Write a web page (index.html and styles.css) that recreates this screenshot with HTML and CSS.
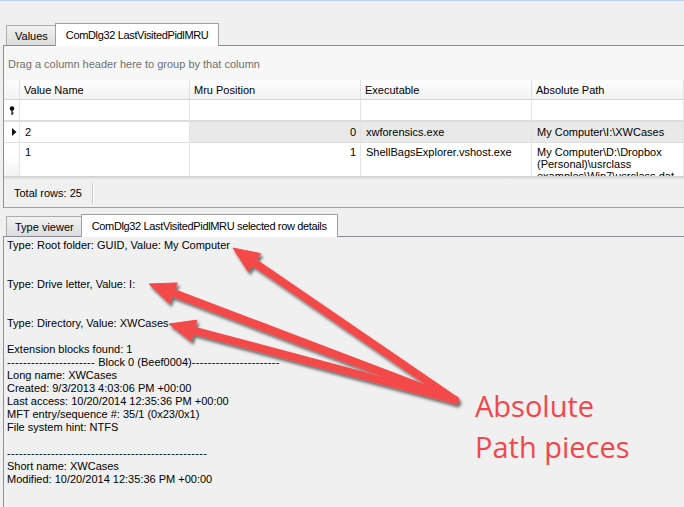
FILE: index.html
```html
<!DOCTYPE html>
<html>
<head>
<meta charset="utf-8">
<link rel="stylesheet" href="styles.css">
</head>
<body>
<div class="app">
  <div class="topline"></div>
  <div class="tabs tabs1">
    <div class="tab">Values</div>
    <div class="tab active">ComDlg32 LastVisitedPidlMRU</div>
  </div>
  <div class="panel1">
    <div class="groupbar">Drag a column header here to group by that column</div>
    <div class="grid">
      <div class="cell hdr ind"></div>
      <div class="cell hdr">Value Name</div>
      <div class="cell hdr">Mru Position</div>
      <div class="cell hdr">Executable</div>
      <div class="cell hdr">Absolute Path</div>

      <div class="cell filt ind">
        <svg width="6" height="9" viewBox="0 0 6 9"><circle cx="3" cy="2.5" r="2.3" fill="#111"/><rect x="2.4" y="4" width="1.3" height="5" fill="#111"/><rect x="3.5" y="6.5" width="1.2" height="1" fill="#111"/></svg>
      </div>
      <div class="cell filt"></div>
      <div class="cell filt"></div>
      <div class="cell filt"></div>
      <div class="cell filt"></div>

      <div class="cell row ind">
        <svg width="5" height="8" viewBox="0 0 5 8"><path d="M0 0 L4.5 4 L0 8 Z" fill="#111"/></svg>
      </div>
      <div class="cell row focus">2</div>
      <div class="cell row sel num">0</div>
      <div class="cell row sel">xwforensics.exe</div>
      <div class="cell row sel">My Computer\I:\XWCases</div>

      <div class="cell row tall ind"></div>
      <div class="cell row tall">1</div>
      <div class="cell row tall num">1</div>
      <div class="cell row tall">ShellBagsExplorer.vshost.exe</div>
      <div class="cell row tall wrap">My Computer\D:\Dropbox (Personal)\usrclass examples\Win7\usrclass.dat</div>
    </div>
    <div class="shadow"></div>
    <div class="footer">
      <span class="total">Total rows: 25</span>
      <span class="sep"></span>
    </div>
  </div>
  <div class="tabs tabs2">
    <div class="tab">Type viewer</div>
    <div class="tab active">ComDlg32 LastVisitedPidlMRU selected row details</div>
  </div>
  <div class="panel2">
    <div class="details">Type: Root folder: GUID, Value: My Computer


Type: Drive letter, Value: I:


Type: Directory, Value: XWCases

Extension blocks found: 1
<span class="dash">----------------------</span> Block 0 (Beef0004)<span class="dash">----------------------</span>
Long name: XWCases
Created: 9/3/2013 4:03:06 PM +00:00
Last access: 10/20/2014 12:35:36 PM +00:00
MFT entry/sequence #: 35/1 (0x23/0x1)
File system hint: NTFS

<span class="dash">--------------------------------------------------</span>
Short name: XWCases
Modified: 10/20/2014 12:35:36 PM +00:00</div>
  </div>
</div>

<svg class="arrows" width="684" height="507" viewBox="0 0 684 507">
  <defs>
    <filter id="sh" x="-20%" y="-20%" width="140%" height="140%">
      <feDropShadow dx="2" dy="3" stdDeviation="1.8" flood-color="#000" flood-opacity="0.55"/>
    </filter>
  </defs>
  <g filter="url(#sh)" fill="#f44a4a" stroke="#f44a4a">
    <line x1="455" y1="400" x2="252" y2="261" stroke-width="8" stroke-linecap="round"/>
    <polygon points="233,248 248.3,271.8 260.7,253.6" stroke-width="1" stroke-linejoin="round"/>
    <line x1="455" y1="400" x2="171" y2="292" stroke-width="8" stroke-linecap="round"/>
    <polygon points="149,284 169.4,303.5 177.2,282.9" stroke-width="1" stroke-linejoin="round"/>
    <line x1="455" y1="400" x2="192" y2="330" stroke-width="8" stroke-linecap="round"/>
    <polygon points="169,324 191.3,341.3 196.9,320.1" stroke-width="1" stroke-linejoin="round"/>
  </g>
</svg>
<div class="note">Absolute<br>Path pieces</div>
</body>
</html>
```

FILE: styles.css
```css
html, body {
  margin: 0;
  padding: 0;
}
body {
  width: 684px;
  height: 507px;
  overflow: hidden;
  background: #f0f0f0;
  font-family: "Liberation Sans", Arial, sans-serif;
  font-size: 11px;
  color: #000;
  position: relative;
}
.app {
  display: flex;
  flex-direction: column;
  height: 507px;
}
.topline {
  height: 1px;
  background: #bcd4ee;
}
.tabs {
  display: flex;
  align-items: flex-end;
  padding-left: 6px;
  position: relative;
  z-index: 2;
}
.tabs1 { height: 44px; }
.tabs2 { height: 28px; }
.tab {
  box-sizing: border-box;
  height: 20px;
  padding: 0 7px 0 8px;
  display: flex;
  align-items: center;
  border: 1px solid #acacac;
  border-bottom: none;
  background: linear-gradient(#f2f2f2, #dcdcdc);
  white-space: nowrap;
}
.tab.active {
  height: 23px;
  padding: 0 10px;
  background: #fff;
  border-color: #a0a0a0;
  margin-bottom: -1px;
  margin-left: -1px;
  letter-spacing: -0.35px;
}
.panel1 {
  margin-left: 3px;
  border-left: 1px solid #8f8f8f;
  border-top: 1px solid #898c95;
  border-bottom: 1px solid #a0a0a0;
  display: flex;
  flex-direction: column;
  height: 161px;
}
.groupbar {
  height: 34px;
  background: #f7f7f7;
  color: #6f6f6f;
  display: flex;
  align-items: center;
  padding-left: 4px;
  padding-top: 2px;
  box-sizing: border-box;
}
.grid {
  display: grid;
  grid-template-columns: 16px 170px 171px 171px 1fr;
  grid-template-rows: 20px 22px 21px 33px;
  background: #fff;
}
.cell {
  box-sizing: border-box;
  border-right: 1px solid #e3e3e3;
  border-bottom: 1px solid #dedede;
  padding: 0 4px;
  white-space: nowrap;
  overflow: hidden;
  display: flex;
  align-items: center;
}
.hdr {
  background: linear-gradient(#fdfdfd, #f3f3f3);
  border-bottom-color: #d5d5d5;
  border-right-color: #e0e0e0;
  padding-left: 4px;
  padding-top: 1px;
}
.hdr.ind, .ind {
  padding: 0;
  justify-content: center;
}
.filt {
  border-bottom: 2px solid #dcdcdc;
}
.row { padding-left: 5px; }
.sel { background: #e9e9e9; }
.focus { background: #fff; }
.num { justify-content: flex-end; padding-right: 4px; }
.tall {
  align-items: flex-start;
  padding-top: 3px;
  border-bottom: none;
}
.tall.ind { background: linear-gradient(#fff 40%, #f3f3f3); }
.wrap {
  white-space: normal;
  line-height: 12px;
  padding-top: 3px;
  display: block;
}
.shadow {
  height: 3px;
  background: linear-gradient(#cfcfcf, #e6e6e6);
}
.footer {
  height: 28px;
  display: flex;
  align-items: center;
  padding-left: 10px;
  gap: 10px;
}
.sep {
  width: 1px;
  height: 21px;
  background: #c8c8c8;
  box-shadow: 1px 0 0 #fff;
}
.panel2 {
  margin-left: 3px;
  border-left: 1px solid #8f8f8f;
  border-top: 1px solid #898c95;
  flex: 1;
}
.details {
  white-space: pre;
  line-height: 13px;
  padding: 2px 0 0 3px;
}
.dash {
  letter-spacing: 0.34px;
}
.arrows {
  position: absolute;
  left: 0;
  top: 0;
  pointer-events: none;
}
.note {
  position: absolute;
  left: 475px;
  top: 385px;
  color: #f2474a;
  font-family: "Open Sans", "Noto Sans", sans-serif;
  font-size: 29px;
  line-height: 41px;
}
```
